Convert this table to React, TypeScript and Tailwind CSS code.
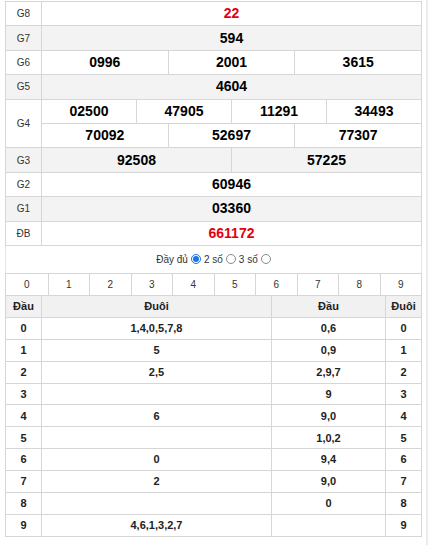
import React from 'react';

type Prize = { label: string; rows: string[][]; red?: boolean };

const prizes: Prize[] = [
  { label: 'G8', rows: [['22']], red: true },
  { label: 'G7', rows: [['594']] },
  { label: 'G6', rows: [['0996', '2001', '3615']] },
  { label: 'G5', rows: [['4604']] },
  { label: 'G4', rows: [['02500', '47905', '11291', '34493'], ['70092', '52697', '77307']] },
  { label: 'G3', rows: [['92508', '57225']] },
  { label: 'G2', rows: [['60946']] },
  { label: 'G1', rows: [['03360']] },
  { label: 'ĐB', rows: [['661172']], red: true },
];

const loto = [
  { d: '0', tail: '1,4,0,5,7,8', head: '0,6' },
  { d: '1', tail: '5', head: '0,9' },
  { d: '2', tail: '2,5', head: '2,9,7' },
  { d: '3', tail: '', head: '9' },
  { d: '4', tail: '6', head: '9,0' },
  { d: '5', tail: '', head: '1,0,2' },
  { d: '6', tail: '0', head: '9,4' },
  { d: '7', tail: '2', head: '9,0' },
  { d: '8', tail: '', head: '0' },
  { d: '9', tail: '4,6,1,3,2,7', head: '' },
];

const Radio = ({ checked }: { checked?: boolean }) =>
  checked ? (
    <span className="inline-flex h-[10px] w-[10px] items-center justify-center rounded-full border border-[#1a73e8] bg-white">
      <span className="h-[6px] w-[6px] rounded-full bg-[#1a73e8]" />
    </span>
  ) : (
    <span className="inline-block h-[10px] w-[10px] rounded-full border border-[#8a8a8a] bg-white" />
  );

export default function App() {
  return (
    <div className="flex h-[545px] w-[428px] bg-white font-['Liberation_Sans',Arial,sans-serif] text-[#222]">
      <div className="w-[426px] pl-[5px] pt-[1px]">
        {/* prize table */}
        <div className="w-[417px] border-x border-t border-[#d6d6d6]">
          {prizes.map((p, i) => (
            <div
              key={p.label}
              className={`flex border-b border-[#d6d6d6] ${i % 2 === 1 ? 'bg-[#f3f3f3]' : 'bg-white'} ${p.rows.length > 1 ? 'h-[48.8px]' : 'h-[24.4px]'}`}
            >
              <div className="flex w-[36px] shrink-0 items-center justify-center border-r border-[#d6d6d6] text-[10px] text-[#333]">
                {p.label}
              </div>
              <div className="flex flex-1 flex-col">
                {p.rows.map((r, ri) => (
                  <div
                    key={ri}
                    className={`flex flex-1 ${ri > 0 ? 'border-t border-[#d6d6d6]' : ''}`}
                  >
                    {r.map((n, ni) => (
                      <div
                        key={ni}
                        className={`flex flex-1 items-center justify-center text-[14px] font-bold ${ni > 0 ? 'border-l border-[#d6d6d6]' : ''} ${p.red ? 'text-[#e3000f]' : 'text-black'}`}
                      >
                        {n}
                      </div>
                    ))}
                  </div>
                ))}
              </div>
            </div>
          ))}
        </div>

        {/* options row */}
        <div className="flex h-[27px] w-[417px] items-center justify-center gap-[3px] border-x border-[#e4e4e4] text-[10px] text-[#333]">
          <span>Đầy đủ</span>
          <Radio checked />
          <span>2 số</span>
          <Radio />
          <span>3 số</span>
          <Radio />
        </div>

        {/* loto table */}
        <div className="w-[417px] border-x border-t border-[#d6d6d6]">
          <div className="grid h-[22px] grid-cols-10 border-b border-[#d6d6d6] text-[10px] text-[#333]">
            {Array.from({ length: 10 }, (_, i) => (
              <div
                key={i}
                className={`flex items-center justify-center ${i > 0 ? 'border-l border-[#d6d6d6]' : ''}`}
              >
                {i}
              </div>
            ))}
          </div>
          <div className="grid h-[22px] grid-cols-[35px_230px_114px_1fr] border-b border-[#d6d6d6] bg-[#f1f1f1] text-[11px] font-bold">
            <div className="flex items-center justify-center">Đầu</div>
            <div className="flex items-center justify-center border-l border-[#d6d6d6]">Đuôi</div>
            <div className="flex items-center justify-center border-l border-[#d6d6d6]">Đầu</div>
            <div className="flex items-center justify-center border-l border-[#d6d6d6]">Đuôi</div>
          </div>
          {loto.map((r) => (
            <div
              key={r.d}
              className="grid h-[21.9px] grid-cols-[35px_230px_114px_1fr] border-b border-[#d6d6d6] text-[11px] font-bold"
            >
              <div className="flex items-center justify-center">{r.d}</div>
              <div className="flex items-center justify-center border-l border-[#d6d6d6]">{r.tail}</div>
              <div className="flex items-center justify-center border-l border-[#d6d6d6]">{r.head}</div>
              <div className="flex items-center justify-center border-l border-[#d6d6d6]">{r.d}</div>
            </div>
          ))}
        </div>
      </div>
      <div className="w-[2px] bg-[#ececec]" />
    </div>
  );
}
